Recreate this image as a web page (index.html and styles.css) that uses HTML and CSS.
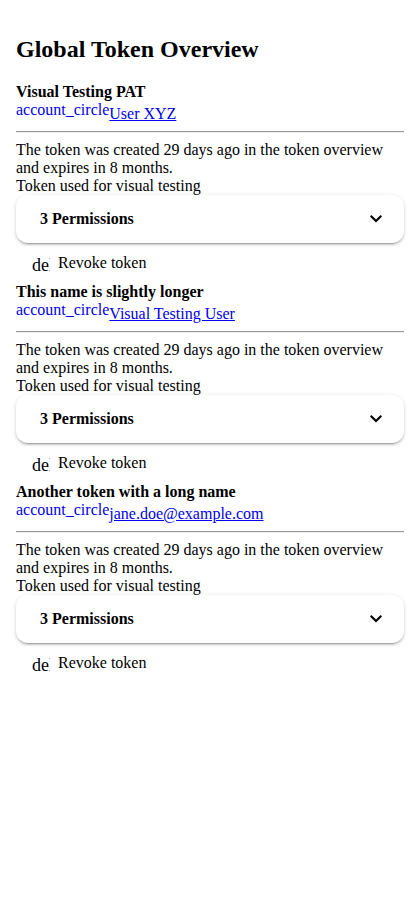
FILE: index.html
```html
<!DOCTYPE html>
<html lang="en">
<head>
<meta charset="utf-8">
<title>Global Token Overview</title>
<link rel="stylesheet" href="styles.css">
</head>
<body>
<main class="page">
  <h1 class="page-title">Global Token Overview</h1>

  <section class="token">
    <div class="token-name">Visual Testing PAT</div>
    <div class="token-owner"><a class="owner-link" href="#"><span class="icon">account_circle</span>User XYZ</a></div>
    <hr class="divider">
    <div class="token-info">The token was created 29 days ago in the token overview and expires in 8 months.</div>
    <div class="token-desc">Token used for visual testing</div>
    <div class="panel">
      <div class="panel-header">
        <span class="panel-title">3 Permissions</span>
        <svg class="chevron" viewBox="0 -960 960 960" width="24" height="24"><path d="M480-345 240-585l56-56 184 184 184-184 56 56-240 240Z"/></svg>
      </div>
    </div>
    <div class="revoke"><span class="btn-icon">delete</span><span class="btn-label">Revoke token</span></div>
  </section>

  <section class="token">
    <div class="token-name">This name is slightly longer</div>
    <div class="token-owner"><a class="owner-link" href="#"><span class="icon">account_circle</span>Visual Testing User</a></div>
    <hr class="divider">
    <div class="token-info">The token was created 29 days ago in the token overview and expires in 8 months.</div>
    <div class="token-desc">Token used for visual testing</div>
    <div class="panel">
      <div class="panel-header">
        <span class="panel-title">3 Permissions</span>
        <svg class="chevron" viewBox="0 -960 960 960" width="24" height="24"><path d="M480-345 240-585l56-56 184 184 184-184 56 56-240 240Z"/></svg>
      </div>
    </div>
    <div class="revoke"><span class="btn-icon">delete</span><span class="btn-label">Revoke token</span></div>
  </section>

  <section class="token">
    <div class="token-name">Another token with a long name</div>
    <div class="token-owner"><a class="owner-link" href="#"><span class="icon">account_circle</span>jane.doe@example.com</a></div>
    <hr class="divider">
    <div class="token-info">The token was created 29 days ago in the token overview and expires in 8 months.</div>
    <div class="token-desc">Token used for visual testing</div>
    <div class="panel">
      <div class="panel-header">
        <span class="panel-title">3 Permissions</span>
        <svg class="chevron" viewBox="0 -960 960 960" width="24" height="24"><path d="M480-345 240-585l56-56 184 184 184-184 56 56-240 240Z"/></svg>
      </div>
    </div>
    <div class="revoke"><span class="btn-icon">delete</span><span class="btn-label">Revoke token</span></div>
  </section>
</main>
</body>
</html>
```

FILE: styles.css
```css
html, body {
  margin: 0;
  padding: 0;
  background: #ffffff;
}

body {
  font-family: "Liberation Serif", "Times New Roman", serif;
  font-size: 16px;
  color: #000000;
}

.page {
  padding: 16px;
}

.page-title {
  font-size: 24px;
  font-weight: bold;
  margin: 20px 0;
}

.token-name {
  font-weight: bold;
}

.owner-link {
  color: #0000ee;
  text-decoration: underline;
}

.icon {
  display: inline-block;
  overflow: hidden;
  text-decoration: none;
  vertical-align: baseline;
}

.divider {
  margin: 8px 0;
  border: 0;
  border-top: 1px solid #9a9a9a;
  border-bottom: 1px solid #eeeeee;
  height: 0;
}

.panel {
  background: #ffffff;
  border-radius: 12px;
  box-shadow: 0 3px 1px -2px rgba(0, 0, 0, 0.2), 0 2px 2px 0 rgba(0, 0, 0, 0.14), 0 1px 5px 0 rgba(0, 0, 0, 0.12);
}

.panel-header {
  height: 48px;
  padding: 0 24px;
  display: flex;
  align-items: center;
}

.panel-title {
  flex: 1;
  font-weight: bold;
}

.chevron {
  width: 24px;
  height: 24px;
  margin: 0 -8px 0 4px;
  fill: #000000;
}

.revoke {
  height: 40px;
  display: flex;
  align-items: center;
  padding-left: 16px;
}

.btn-icon {
  display: inline-block;
  width: 18px;
  height: 18px;
  font-size: 18px;
  line-height: 18px;
  overflow: hidden;
  white-space: nowrap;
  margin-right: 8px;
  margin-top: 3px;
}

.btn-label {
  font-size: 16px;
}
```
